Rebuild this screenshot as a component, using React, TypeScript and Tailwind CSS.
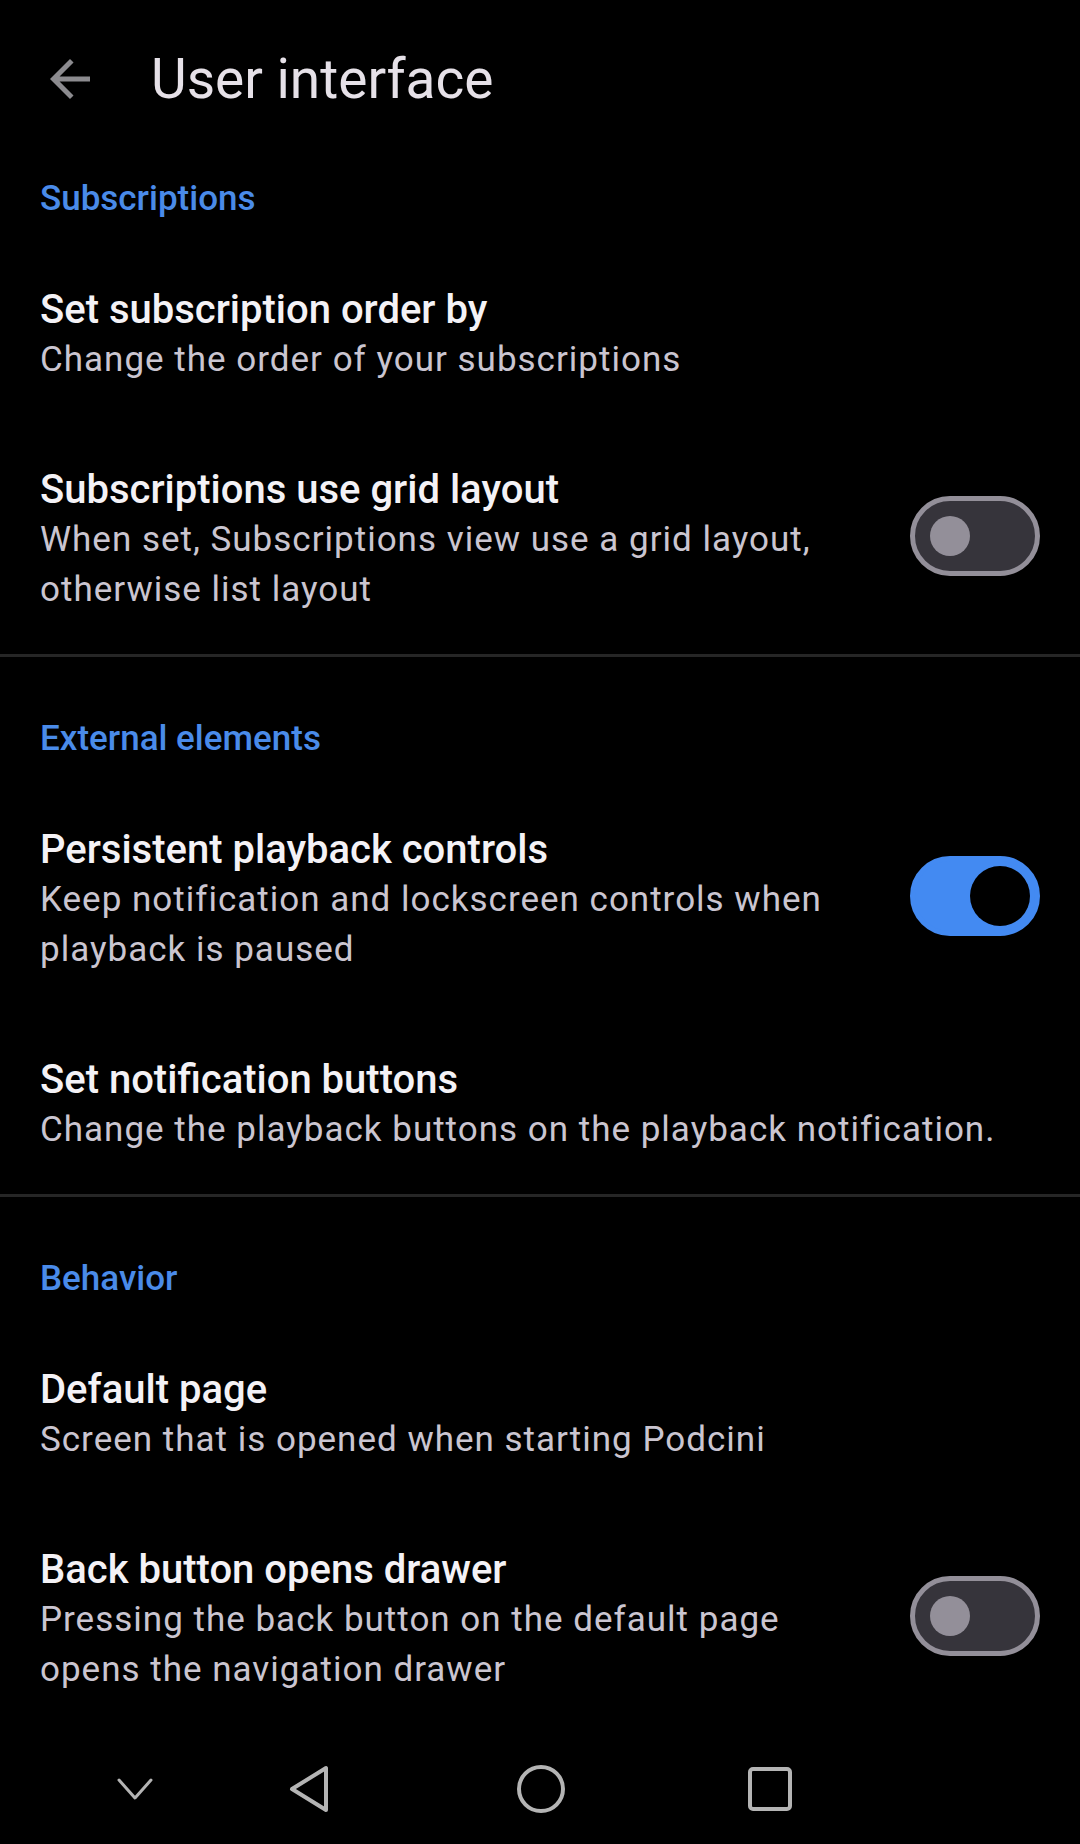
import React, { useState } from 'react';

interface SettingItem {
  key: string;
  title: string;
  summary: string;
  toggle?: boolean;
}

interface SettingSection {
  key: string;
  label: string;
  items: SettingItem[];
}

const SECTIONS: SettingSection[] = [
  {
    key: 'subscriptions',
    label: 'Subscriptions',
    items: [
      { key: 'order', title: 'Set subscription order by', summary: 'Change the order of your subscriptions' },
      {
        key: 'grid',
        title: 'Subscriptions use grid layout',
        summary: 'When set, Subscriptions view use a grid layout, otherwise list layout',
        toggle: false,
      },
    ],
  },
  {
    key: 'external',
    label: 'External elements',
    items: [
      {
        key: 'persistent',
        title: 'Persistent playback controls',
        summary: 'Keep notification and lockscreen controls when playback is paused',
        toggle: true,
      },
      {
        key: 'buttons',
        title: 'Set notification buttons',
        summary: 'Change the playback buttons on the playback notification.',
      },
    ],
  },
  {
    key: 'behavior',
    label: 'Behavior',
    items: [
      { key: 'default', title: 'Default page', summary: 'Screen that is opened when starting Podcini' },
      {
        key: 'back',
        title: 'Back button opens drawer',
        summary: 'Pressing the back button on the default page opens the navigation drawer',
        toggle: false,
      },
    ],
  },
];

function Switch({ checked, onChange }: { checked: boolean; onChange: () => void }) {
  return (
    <button
      type="button"
      role="switch"
      aria-checked={checked}
      onClick={onChange}
      className={`flex h-[80px] w-[130px] shrink-0 items-center rounded-full border-[5px] ${
        checked ? 'border-[#438af2] bg-[#438af2]' : 'border-[#938f99] bg-[#36343b]'
      }`}
    >
      {checked ? (
        <span className="ml-[55px] h-[60px] w-[60px] rounded-full bg-black" />
      ) : (
        <span className="ml-[15px] h-[40px] w-[40px] rounded-full bg-[#938f99]" />
      )}
    </button>
  );
}

export default function App() {
  const [toggles, setToggles] = useState<Record<string, boolean>>({
    grid: false,
    persistent: true,
    back: false,
  });

  const flip = (key: string) => setToggles((prev) => ({ ...prev, [key]: !prev[key] }));

  return (
    <div className="flex h-[1844px] w-[1080px] flex-col overflow-hidden bg-black font-['Roboto',sans-serif]">
      <header className="flex h-[158px] shrink-0 items-center">
        <button type="button" className="ml-[40px] flex h-[60px] w-[60px] items-center justify-center">
          <svg viewBox="0 0 24 24" className="h-[60px] w-[60px]" fill="#8c8b8f">
            <path d="M20 11H7.83l5.59-5.59L12 4l-8 8 8 8 1.41-1.41L7.83 13H20v-2z" />
          </svg>
        </button>
        <h1 className="ml-[51px] text-[55px] leading-[64px] font-normal text-[#e6e1e8]">User interface</h1>
      </header>

      <main className="flex-1">
        {SECTIONS.map((section, i) => (
          <section key={section.key} className={i > 0 ? 'border-t-[3px] border-[#262626]' : ''}>
            <div
              className={`px-[40px] pb-[21px] text-[35px] leading-[50px] font-medium text-[#4a8be9] ${
                i > 0 ? 'pt-[57px]' : 'pt-[16px]'
              }`}
            >
              {section.label}
            </div>
            {section.items.map((item, j) => (
              <div
                key={item.key}
                className={`flex items-center pt-[40px] pl-[40px] pr-[40px] ${
                  j === section.items.length - 1 ? 'pb-[39px]' : 'pb-[40px]'
                }`}
              >
                <div className="min-w-0 flex-1">
                  <div className="text-[40px] leading-[50px] font-medium text-[#f4f2f6]">{item.title}</div>
                  <div className="text-[35px] leading-[50px] tracking-[1px] text-[#cac5d0]">{item.summary}</div>
                </div>
                {item.toggle !== undefined ? (
                  <div className="mb-[8px] pl-[40px]">
                    <Switch checked={toggles[item.key]} onChange={() => flip(item.key)} />
                  </div>
                ) : null}
              </div>
            ))}
          </section>
        ))}
      </main>

      <nav className="flex h-[110px] shrink-0 items-center">
        <svg viewBox="0 0 36 22" className="ml-[117px] h-[22px] w-[36px]" fill="none" stroke="#b4b4b4" strokeWidth="3" strokeLinejoin="round" strokeLinecap="round">
          <path d="M2 2 L18 20 L34 2" />
        </svg>
        <svg viewBox="0 0 42 48" className="ml-[135px] h-[48px] w-[42px]" fill="none" stroke="#b4b4b4" strokeWidth="4" strokeLinejoin="round">
          <path d="M38 3 L38 45 L4 24 Z" />
        </svg>
        <svg viewBox="0 0 48 48" className="ml-[187px] h-[48px] w-[48px]" fill="none" stroke="#b4b4b4" strokeWidth="4">
          <circle cx="24" cy="24" r="22" />
        </svg>
        <svg viewBox="0 0 44 44" className="ml-[183px] h-[44px] w-[44px]" fill="none" stroke="#b4b4b4" strokeWidth="4">
          <rect x="2" y="2" width="40" height="40" rx="3" />
        </svg>
      </nav>
    </div>
  );
}
